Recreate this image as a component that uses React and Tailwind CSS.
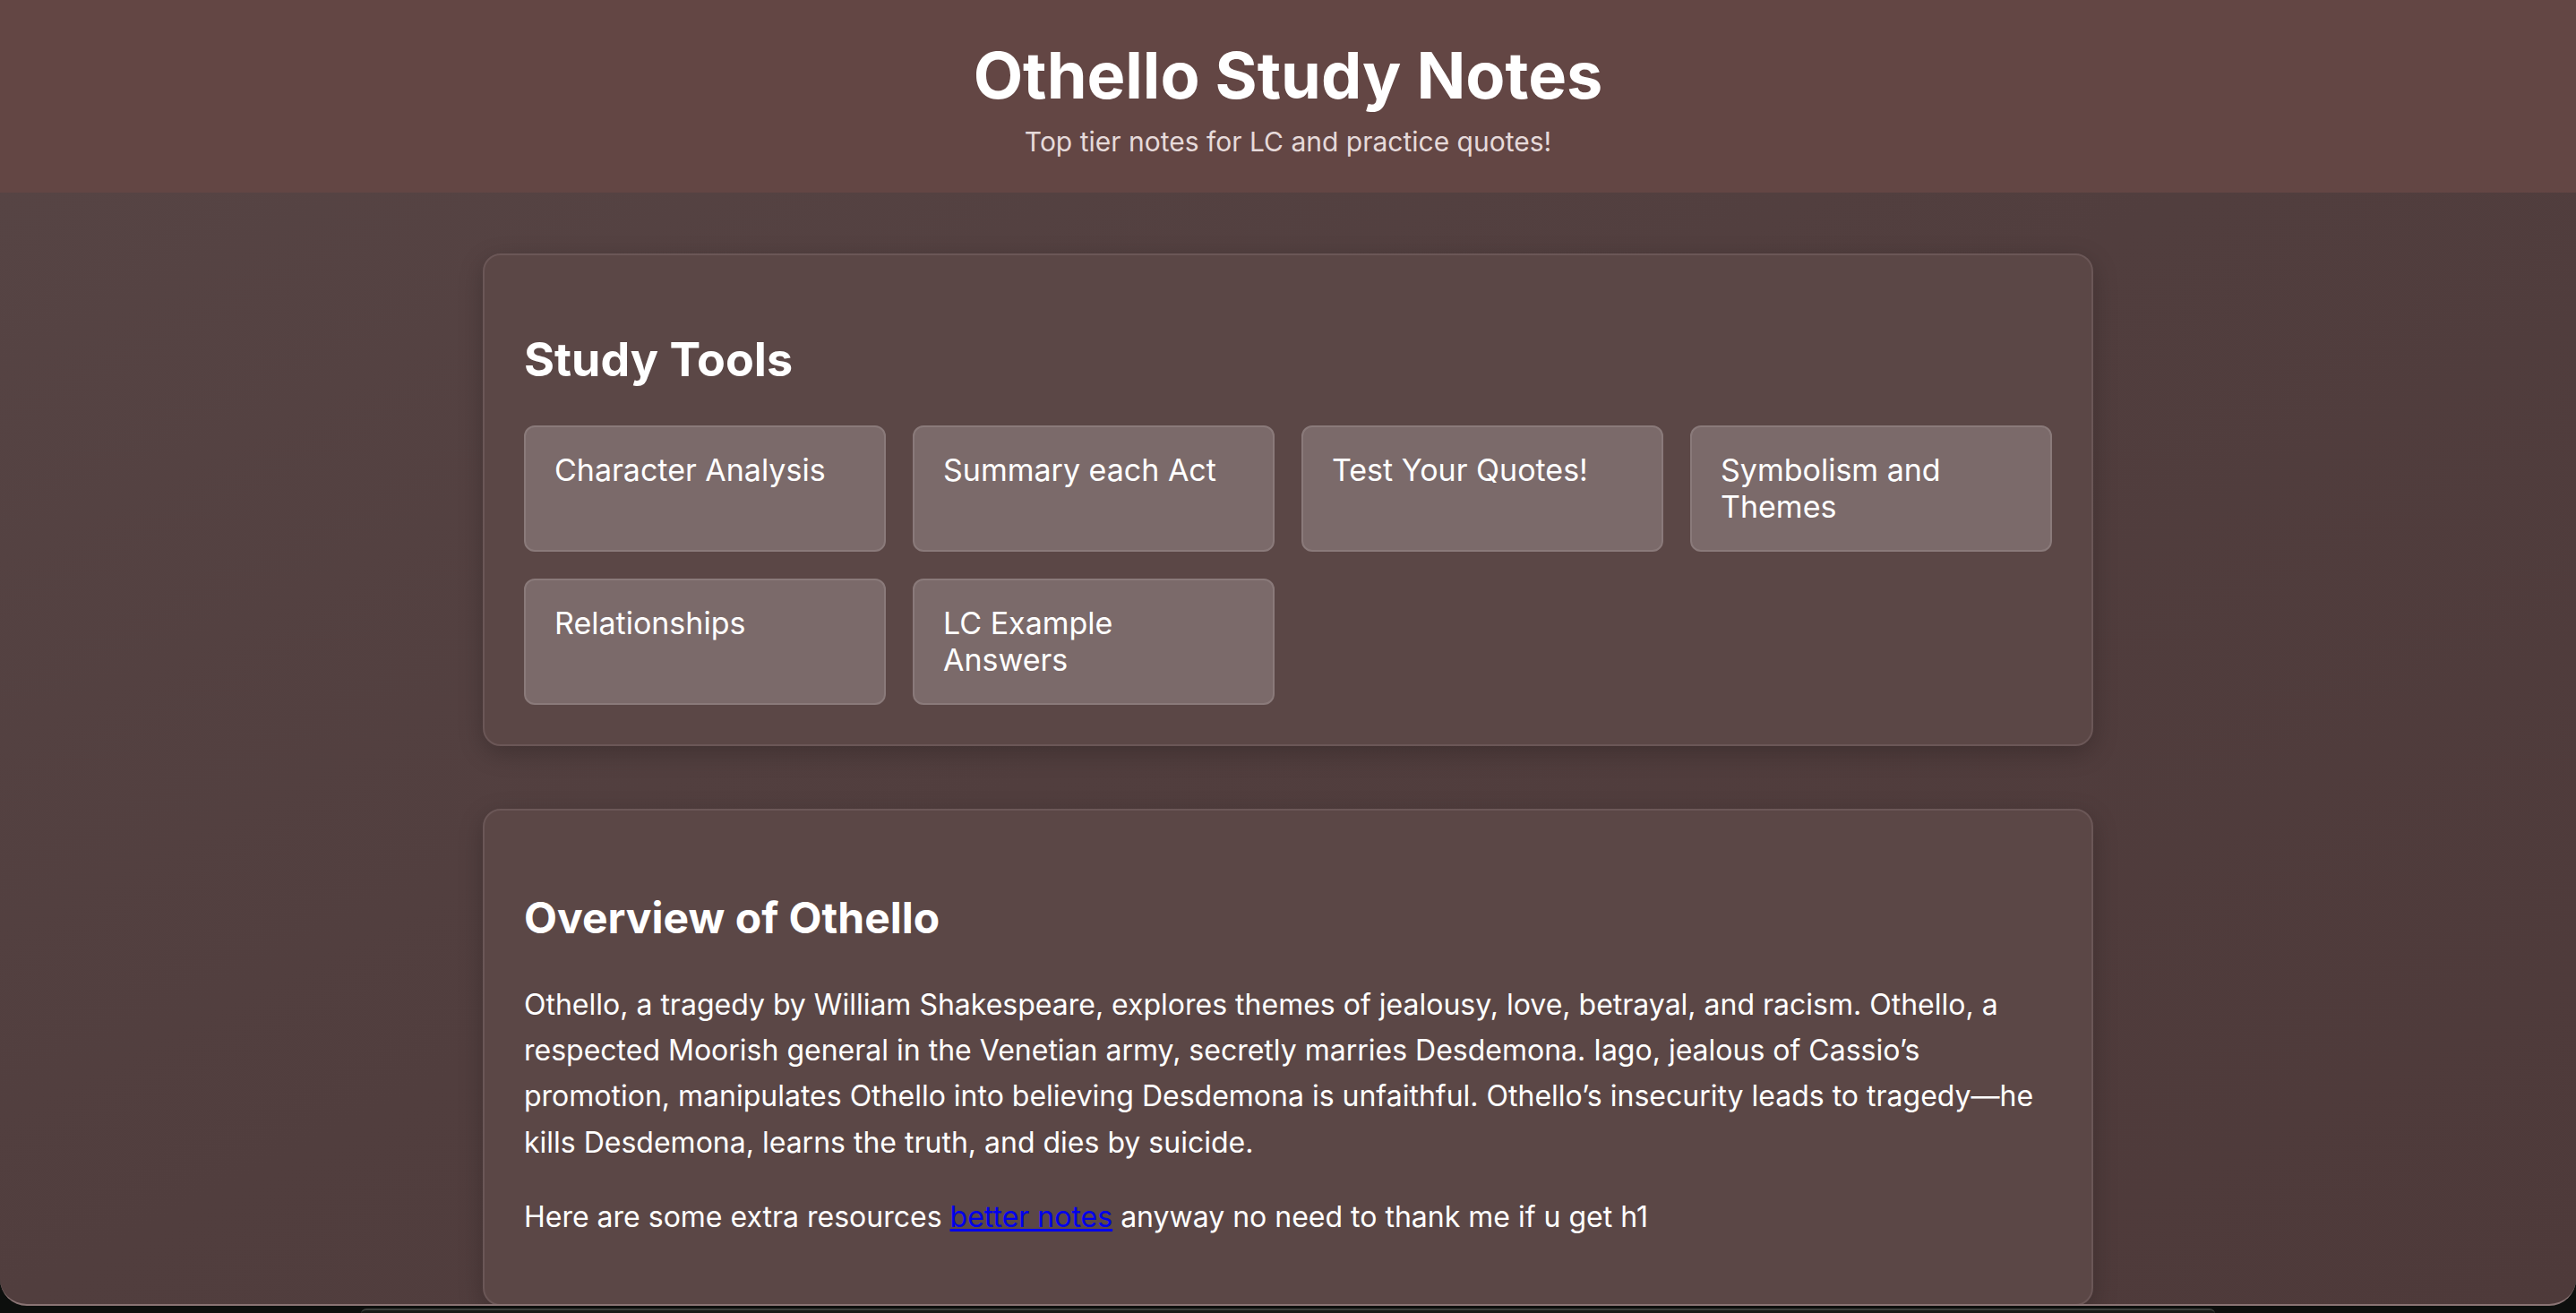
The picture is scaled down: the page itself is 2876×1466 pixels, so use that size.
const tools = [
  "Character Analysis",
  "Summary each Act",
  "Test Your Quotes!",
  "Symbolism and Themes",
  "Relationships",
  "LC Example Answers",
];

export default function App() {
  return (
    <div className="h-[1466px] bg-[#0d0f0d] overflow-hidden font-['Inter','Noto_Sans',sans-serif]">
      {/* Page window */}
      <div className="h-[1458px] overflow-hidden rounded-b-[30px] border-b-2 border-[#8a7474] bg-linear-to-br from-[#574545] via-[#513e3e] to-[#4e3a3a]">
        {/* Header */}
        <header className="bg-[#634644] h-[215px] pt-[48px] text-center">
          <h1 className="text-[72px] leading-none font-bold text-white">Othello Study Notes</h1>
          <p className="mt-[23px] text-[30px] leading-none text-[#e6dada]">
            Top tier notes for LC and practice quotes!
          </p>
        </header>

        <main className="flex flex-col items-center gap-[70px] pt-[68px]">
          {/* Study tools */}
          <section className="w-[1798px] rounded-[20px] border-2 border-[#6b5757] bg-[#5b4746] px-[44px] pt-[91px] pb-[44px] shadow-[0_8px_28px_rgba(0,0,0,0.22)]">
            <h2 className="text-[52px] leading-none font-bold text-white mb-[47px]">Study Tools</h2>
            <div className="grid grid-cols-4 gap-[30px]">
              {tools.map((t) => (
                <div
                  key={t}
                  className="min-h-[141px] cursor-pointer rounded-[12px] border-2 border-[#8a7a7a] bg-[#7b6a6a] px-[32px] pt-[27px] pb-[28px] text-[34px] leading-[41px] text-white"
                >
                  {t}
                </div>
              ))}
            </div>
          </section>

          {/* Overview */}
          <section className="w-[1798px] rounded-[20px] border-2 border-[#6b5757] bg-[#5b4746] px-[44px] pt-[96px] pb-[72px] shadow-[0_8px_28px_rgba(0,0,0,0.22)]">
            <h2 className="text-[48px] leading-none font-bold text-white mb-[47px]">Overview of Othello</h2>
            <p className="text-[32px] leading-[1.6] text-white">
              Othello, a tragedy by William Shakespeare, explores themes of jealousy, love, betrayal, and racism. Othello, a respected Moorish general in the Venetian army, secretly marries Desdemona. Iago, jealous of Cassio’s promotion, manipulates Othello into believing Desdemona is unfaithful. Othello’s insecurity leads to tragedy—he kills Desdemona, learns the truth, and dies by suicide.
            </p>
            <p className="mt-[32px] text-[32px] leading-[1.6] text-white">
              Here are some extra resources{" "}
              <a href="#" className="text-[#0000ee] underline">better notes</a>{" "}
              anyway no need to thank me if u get h1
            </p>
          </section>
        </main>
      </div>

      {/* Dock edge below the window */}
      <div className="mx-[403px] mt-[3px] h-[6px] rounded-t-[12px] border-t-2 border-[#3b3f3b] bg-[#161916]"></div>
    </div>
  );
}
